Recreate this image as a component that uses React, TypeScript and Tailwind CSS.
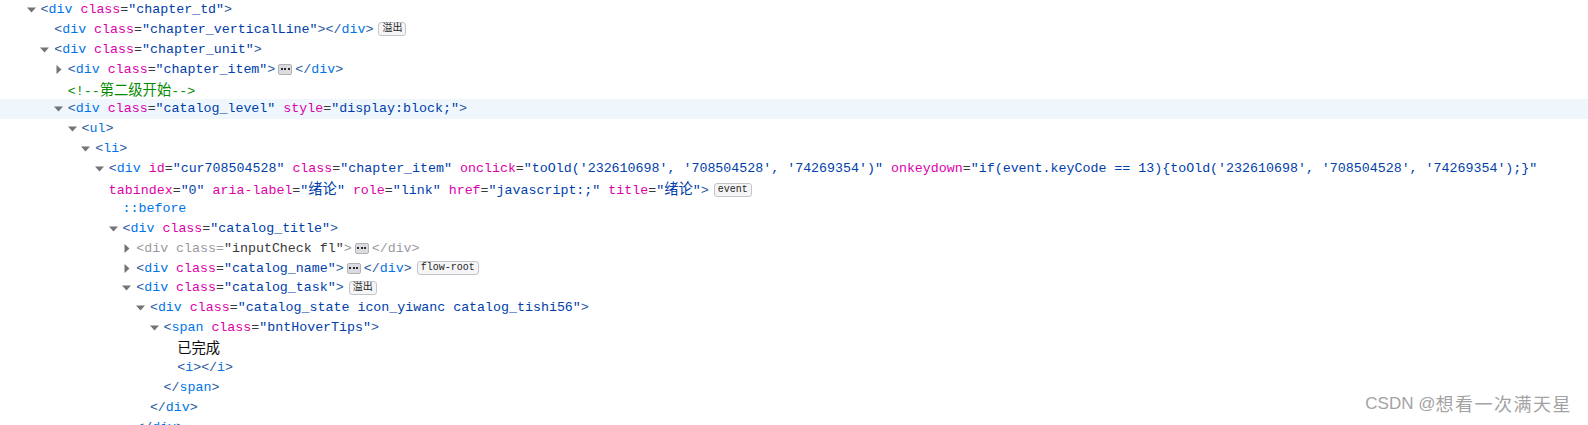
import type { ReactNode } from "react";

const indent = [
  "pl-[26.5px]",
  "pl-[40.2px]",
  "pl-[53.8px]",
  "pl-[67.5px]",
  "pl-[81.2px]",
  "pl-[94.8px]",
  "pl-[108.5px]",
  "pl-[122.2px]",
  "pl-[135.9px]",
  "pl-[149.5px]",
  "pl-[163.2px]",
];

const mono = "font-['Liberation_Mono','Noto_Sans_CJK_SC',monospace]";

const Br = ({ c, dim }: { c: string; dim?: boolean }) => (
  <span className={dim ? "text-[#9a9aa2]" : "text-[#2a5a9e]"}>{c}</span>
);
const Tg = ({ c, dim }: { c: string; dim?: boolean }) => (
  <span className={dim ? "text-[#9a9aa2]" : "text-[#0074e8]"}>{c}</span>
);
const An = ({ c, dim }: { c: string; dim?: boolean }) => (
  <span className={dim ? "text-[#9a9aa2]" : "text-[#dd00a9]"}>{c}</span>
);
const Eq = ({ dim }: { dim?: boolean }) => (
  <span className={dim ? "text-[#9a9aa2]" : "text-[#38383d]"}>=</span>
);
const Av = ({ c, dim }: { c: ReactNode; dim?: boolean }) => (
  <span className={dim ? "text-[#38383d]" : "text-[#003eaa]"}>
    "{c}"
  </span>
);
const Cjk = ({ c }: { c: string }) => (
  <span className="font-['Noto_Sans_CJK_SC',sans-serif] text-[14.3px]">{c}</span>
);

const Attr = ({ n, v, dim }: { n: string; v: ReactNode; dim?: boolean }) => (
  <>
    {" "}
    <An c={n} dim={dim} />
    <Eq dim={dim} />
    <Av c={v} dim={dim} />
  </>
);

const Badge = ({ children }: { children: ReactNode }) => (
  <span className="ml-[5px] inline-flex h-[14px] items-center rounded-[3px] border border-[#c4c4ca] bg-[#f5f5f7] px-[3px] align-middle text-[10px] leading-[12px] text-[#1f1f23]">
    {children}
  </span>
);

const Dots = () => (
  <span className="mx-[3px] inline-flex h-[11px] w-[14px] items-center justify-center gap-[1.5px] rounded-[2px] border border-[#b1b1b8] bg-[#dcdce0] align-middle">
    <span className="h-[2px] w-[2px] bg-[#2a2a2e]" />
    <span className="h-[2px] w-[2px] bg-[#2a2a2e]" />
    <span className="h-[2px] w-[2px] bg-[#2a2a2e]" />
  </span>
);

const Twisty = ({ dir }: { dir?: "down" | "right" }) => (
  <span className="flex w-[14px] shrink-0 items-center">
    {dir === "down" && (
      <svg width="9" height="6" viewBox="0 0 9 6">
        <path d="M0 0.5 L9 0.5 L4.5 5.5 Z" fill="#737378" />
      </svg>
    )}
    {dir === "right" && (
      <svg width="8" height="9" viewBox="0 0 8 9" className="ml-[2px]">
        <path d="M0.5 0 L5.5 4.5 L0.5 9 Z" fill="#737378" />
      </svg>
    )}
  </span>
);

const Row = ({
  level,
  dir,
  hl,
  children,
}: {
  level: number;
  dir?: "down" | "right";
  hl?: boolean;
  children: ReactNode;
}) => (
  <div
    className={`flex h-[19.9px] items-center ${indent[level]} ${
      hl ? "bg-[#eff7fd]" : ""
    }`}
  >
    <Twisty dir={dir} />
    <span className="whitespace-pre">{children}</span>
  </div>
);

const Open = ({ t, dim, children }: { t: string; dim?: boolean; children?: ReactNode }) => (
  <>
    <Br c="<" dim={dim} />
    <Tg c={t} dim={dim} />
    {children}
    <Br c=">" dim={dim} />
  </>
);

const Close = ({ t, dim }: { t: string; dim?: boolean }) => (
  <>
    <Br c="</" dim={dim} />
    <Tg c={t} dim={dim} />
    <Br c=">" dim={dim} />
  </>
);

export default function App() {
  return (
    <div
      className={`relative h-[425px] w-full overflow-hidden bg-white text-[13.3px] ${mono}`}
    >
      <Row level={0} dir="down">
        <Open t="div">
          <Attr n="class" v="chapter_td" />
        </Open>
      </Row>
      <Row level={1}>
        <Open t="div">
          <Attr n="class" v="chapter_verticalLine" />
        </Open>
        <Close t="div" />
        <Badge>溢出</Badge>
      </Row>
      <Row level={1} dir="down">
        <Open t="div">
          <Attr n="class" v="chapter_unit" />
        </Open>
      </Row>
      <Row level={2} dir="right">
        <Open t="div">
          <Attr n="class" v="chapter_item" />
        </Open>
        <Dots />
        <Close t="div" />
      </Row>
      <Row level={2}>
        <span className="text-[#058b00]">
          {"<!--"}
          <Cjk c="第二级开始" />
          {"-->"}
        </span>
      </Row>
      <Row level={2} dir="down" hl>
        <Open t="div">
          <Attr n="class" v="catalog_level" />
          <Attr n="style" v="display:block;" />
        </Open>
      </Row>
      <Row level={3} dir="down">
        <Open t="ul" />
      </Row>
      <Row level={4} dir="down">
        <Open t="li" />
      </Row>
      <Row level={5} dir="down">
        <Br c="<" />
        <Tg c="div" />
        <Attr n="id" v="cur708504528" />
        <Attr n="class" v="chapter_item" />
        <Attr n="onclick" v="toOld('232610698', '708504528', '74269354')" />
        <Attr
          n="onkeydown"
          v="if(event.keyCode == 13){toOld('232610698', '708504528', '74269354');}"
        />
      </Row>
      <Row level={5}>
        <An c="tabindex" />
        <Eq />
        <Av c="0" />
        <Attr n="aria-label" v={<Cjk c="绪论" />} />
        <Attr n="role" v="link" />
        <Attr n="href" v="javascript:;" />
        <Attr n="title" v={<Cjk c="绪论" />} />
        <Br c=">" />
        <Badge>event</Badge>
      </Row>
      <Row level={6}>
        <span className="text-[#0074e8]">::before</span>
      </Row>
      <Row level={6} dir="down">
        <Open t="div">
          <Attr n="class" v="catalog_title" />
        </Open>
      </Row>
      <Row level={7} dir="right">
        <Open t="div" dim>
          <Attr n="class" v="inputCheck fl" dim />
        </Open>
        <Dots />
        <Close t="div" dim />
      </Row>
      <Row level={7} dir="right">
        <Open t="div">
          <Attr n="class" v="catalog_name" />
        </Open>
        <Dots />
        <Close t="div" />
        <Badge>flow-root</Badge>
      </Row>
      <Row level={7} dir="down">
        <Open t="div">
          <Attr n="class" v="catalog_task" />
        </Open>
        <Badge>溢出</Badge>
      </Row>
      <Row level={8} dir="down">
        <Open t="div">
          <Attr n="class" v="catalog_state icon_yiwanc catalog_tishi56" />
        </Open>
      </Row>
      <Row level={9} dir="down">
        <Open t="span">
          <Attr n="class" v="bntHoverTips" />
        </Open>
      </Row>
      <Row level={10}>
        <span className="font-['Noto_Sans_CJK_SC',sans-serif] text-[14.3px] text-[#0c0c0d]">
          已完成
        </span>
      </Row>
      <Row level={10}>
        <Open t="i" />
        <Close t="i" />
      </Row>
      <Row level={9}>
        <Close t="span" />
      </Row>
      <Row level={8}>
        <Close t="div" />
      </Row>
      <Row level={7}>
        <Close t="div" />
      </Row>

      <div className="pointer-events-none absolute bottom-[8px] right-[16px] flex items-center font-['Liberation_Sans',sans-serif] text-[17px] text-[#a3a3a3]">
        <span>CSDN @</span>
        <span className="font-['Noto_Sans_CJK_SC',sans-serif] text-[18px] tracking-[1.5px]">
          想看一次满天星
        </span>
      </div>
    </div>
  );
}
